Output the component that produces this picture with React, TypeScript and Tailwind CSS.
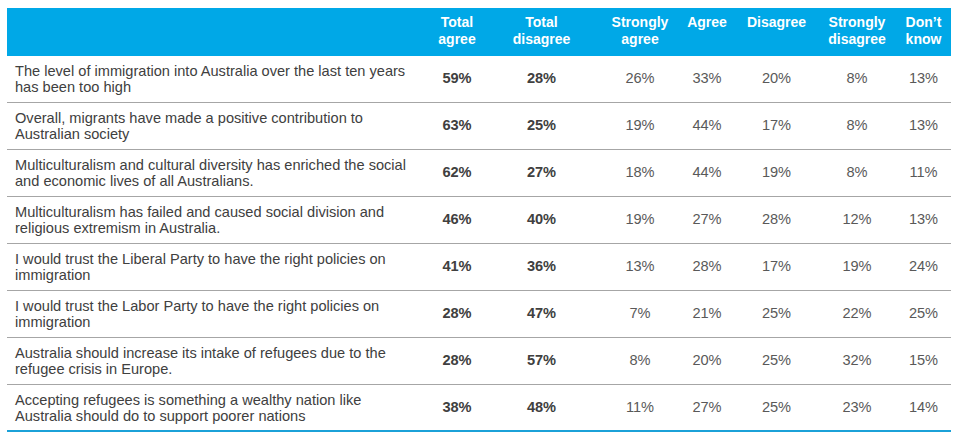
const rows: { text: string[]; vals: string[] }[] = [
  { text: ['The level of immigration into Australia over the last ten years', 'has been too high'], vals: ['59%', '28%', '26%', '33%', '20%', '8%', '13%'] },
  { text: ['Overall, migrants have made a positive contribution to', 'Australian society'], vals: ['63%', '25%', '19%', '44%', '17%', '8%', '13%'] },
  { text: ['Multiculturalism and cultural diversity has enriched the social', 'and economic lives of all Australians.'], vals: ['62%', '27%', '18%', '44%', '19%', '8%', '11%'] },
  { text: ['Multiculturalism has failed and caused social division and', 'religious extremism in Australia.'], vals: ['46%', '40%', '19%', '27%', '28%', '12%', '13%'] },
  { text: ['I would trust the Liberal Party to have the right policies on', 'immigration'], vals: ['41%', '36%', '13%', '28%', '17%', '19%', '24%'] },
  { text: ['I would trust the Labor Party to have the right policies on', 'immigration'], vals: ['28%', '47%', '7%', '21%', '25%', '22%', '25%'] },
  { text: ['Australia should increase its intake of refugees due to the', 'refugee crisis in Europe.'], vals: ['28%', '57%', '8%', '20%', '25%', '32%', '15%'] },
  { text: ['Accepting refugees is something a wealthy nation like', 'Australia should do to support poorer nations'], vals: ['38%', '48%', '11%', '27%', '25%', '23%', '14%'] },
]

const headers = [
  ['Total', 'agree'],
  ['Total', 'disagree'],
  ['Strongly', 'agree'],
  ['Agree'],
  ['Disagree'],
  ['Strongly', 'disagree'],
  ['Don\u2019t', 'know'],
]

// per-column nudges so text centres line up with the slide
const cellPad = ['', '', 'pl-[23px]', '', '', '', 'pr-[6px]']

const cols = 'grid grid-cols-[408px_84px_85px_89px_68px_71px_90px_49px]'

export default function App() {
  return (
    <div className="w-[961px] h-[443px] bg-white pt-[8px] pl-[7px]" style={{ fontFamily: '"Liberation Sans", Arial, sans-serif' }}>
      <div className="w-[944px]">
        <div className={`${cols} h-[48px] bg-[#00a8e7] text-white font-bold text-[14px] leading-[17px]`}>
          <div />
          {headers.map((h, i) => (
            <div key={i} className={`flex flex-col items-center pt-[6px] ${cellPad[i]}`}>
              {h.map((l) => <span key={l}>{l}</span>)}
            </div>
          ))}
        </div>
        {rows.map((r, ri) => (
          <div
            key={ri}
            className={`${cols} h-[47px] items-center text-[14.6px] ${ri === rows.length - 1 ? 'border-b-2 border-[#1ba1d8]' : 'border-b border-[#a6a6a6]'}`}
          >
            <div className="pl-[8px] text-[#404040] leading-[16px]">
              {r.text.map((t) => <div key={t}>{t}</div>)}
            </div>
            {r.vals.map((v, i) => (
              <div key={i} className={`text-center ${cellPad[i]} ${i < 2 ? 'font-bold text-[#404040]' : 'text-[#595959]'}`}>
                {v}
              </div>
            ))}
          </div>
        ))}
      </div>
    </div>
  )
}
